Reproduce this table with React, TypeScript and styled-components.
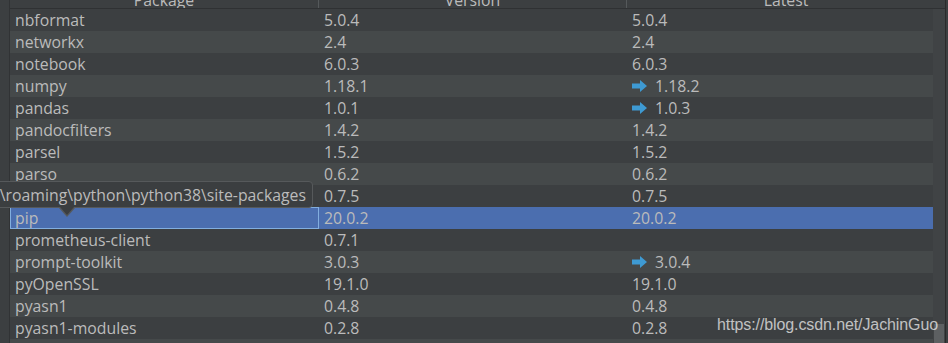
import React from 'react';
import styled, { createGlobalStyle } from 'styled-components';

const GlobalStyle = createGlobalStyle`
  html, body {
    margin: 0;
    padding: 0;
    background: #3c3f41;
    overflow: hidden;
  }
  #root {
    width: 948px;
    height: 343px;
  }
`;

type Pkg = { name: string; version: string; latest: string; upgrade?: boolean };

const packages: Pkg[] = [
  { name: 'nbformat', version: '5.0.4', latest: '5.0.4' },
  { name: 'networkx', version: '2.4', latest: '2.4' },
  { name: 'notebook', version: '6.0.3', latest: '6.0.3' },
  { name: 'numpy', version: '1.18.1', latest: '1.18.2', upgrade: true },
  { name: 'pandas', version: '1.0.1', latest: '1.0.3', upgrade: true },
  { name: 'pandocfilters', version: '1.4.2', latest: '1.4.2' },
  { name: 'parsel', version: '1.5.2', latest: '1.5.2' },
  { name: 'parso', version: '0.6.2', latest: '0.6.2' },
  { name: 'pickleshare', version: '0.7.5', latest: '0.7.5' },
  { name: 'pip', version: '20.0.2', latest: '20.0.2' },
  { name: 'prometheus-client', version: '0.7.1', latest: '' },
  { name: 'prompt-toolkit', version: '3.0.3', latest: '3.0.4', upgrade: true },
  { name: 'pyOpenSSL', version: '19.1.0', latest: '19.1.0' },
  { name: 'pyasn1', version: '0.4.8', latest: '0.4.8' },
  { name: 'pyasn1-modules', version: '0.2.8', latest: '0.2.8' },
  { name: 'pycparser', version: '2.20', latest: '2.20' },
];

const SELECTED = 'pip';

const Screen = styled.div`
  position: relative;
  display: flex;
  width: 948px;
  height: 343px;
  overflow: hidden;
  background: #3c3f41;
  font-family: 'Open Sans', 'Noto Sans', sans-serif;
  font-size: 15.8px;
  color: #bbbbbb;
`;

const Gutter = styled.div`
  flex: none;
  width: 9px;
  border-right: 1px solid #313335;
`;

const Panel = styled.div`
  flex: none;
  display: flex;
  flex-direction: column;
  width: 935px;
  border-right: 1px solid #2b2b2b;
`;

const Header = styled.div`
  flex: none;
  display: grid;
  grid-template-columns: 309px 308px 1fr;
  height: 8px;
  border-bottom: 1px solid #2f3133;
  background: #3c3f41;
`;

const HeaderCell = styled.div<{ $last?: boolean }>`
  display: flex;
  align-items: flex-end;
  justify-content: center;
  overflow: hidden;
  line-height: 16px;
  border-right: ${(p) => (p.$last ? 'none' : '1px solid #55595b')};
`;

const Body = styled.div`
  flex: 1;
  display: flex;
  min-height: 0;
`;

const Rows = styled.div`
  flex: none;
  width: 923px;
  display: flex;
  flex-direction: column;
`;

const Row = styled.div<{ $alt: boolean; $selected: boolean }>`
  flex: none;
  display: grid;
  grid-template-columns: 309px 308px 1fr;
  height: 22px;
  background: ${(p) => (p.$selected ? '#4b6eaf' : p.$alt ? '#45494a' : '#3c3f41')};
`;

const Cell = styled.div<{ $focused?: boolean }>`
  display: flex;
  align-items: center;
  gap: 8px;
  padding-left: 4px;
  border: 1px solid ${(p) => (p.$focused ? '#82aedf' : 'transparent')};
  white-space: nowrap;
  overflow: hidden;
  line-height: 20px;
`;

const ScrollTrack = styled.div`
  flex: none;
  width: 12px;
  display: flex;
  flex-direction: column;
  justify-content: flex-end;
  background: #404345;
`;

const Thumb = styled.div`
  height: 19px;
  margin: 0 1px 0 1px;
  background: #5d6062;
`;

const Tooltip = styled.div`
  position: absolute;
  top: 181px;
  left: -20px;
  width: 333px;
  height: 27px;
  box-sizing: border-box;
  display: flex;
  align-items: center;
  justify-content: flex-end;
  padding-right: 6px;
  white-space: nowrap;
  background: #3b3e40;
  border: 1px solid #56595b;
  border-radius: 4px;

  &::before,
  &::after {
    content: '';
    position: absolute;
    width: 0;
    height: 0;
  }
  &::before {
    left: 78px;
    bottom: -10px;
    border-left: 8px solid transparent;
    border-right: 8px solid transparent;
    border-top: 9px solid #56595b;
  }
  &::after {
    left: 79px;
    bottom: -8px;
    border-left: 7px solid transparent;
    border-right: 7px solid transparent;
    border-top: 8px solid #3b3e40;
  }
`;

const Watermark = styled.div`
  position: absolute;
  left: 717px;
  top: 316px;
  font-family: 'Liberation Sans', Arial, sans-serif;
  font-size: 16px;
  letter-spacing: -0.1px;
  color: rgba(232, 232, 232, 0.78);
  white-space: nowrap;
`;

function UpgradeArrow() {
  return (
    <svg width="15" height="12" viewBox="0 0 15 12" style={{ flex: 'none' }}>
      <polygon points="0,3.5 8,3.5 8,0 15,6 8,12 8,8.5 0,8.5" fill="#3e9ad3" />
    </svg>
  );
}

export default function App() {
  return (
    <Screen>
      <GlobalStyle />
      <Gutter />
      <Panel>
        <Header>
          <HeaderCell>Package</HeaderCell>
          <HeaderCell>Version</HeaderCell>
          <HeaderCell $last>Latest</HeaderCell>
        </Header>
        <Body>
          <Rows>
            {packages.map((pkg, i) => {
              const selected = pkg.name === SELECTED;
              return (
                <Row key={pkg.name} $alt={i % 2 === 1} $selected={selected}>
                  <Cell $focused={selected}>{pkg.name}</Cell>
                  <Cell>{pkg.version}</Cell>
                  <Cell>
                    {pkg.upgrade && <UpgradeArrow />}
                    {pkg.latest}
                  </Cell>
                </Row>
              );
            })}
          </Rows>
          <ScrollTrack>
            <Thumb />
          </ScrollTrack>
        </Body>
      </Panel>
      <Tooltip>\roaming\python\python38\site-packages</Tooltip>
      <Watermark>https://blog.csdn.net/JachinGuo</Watermark>
    </Screen>
  );
}
